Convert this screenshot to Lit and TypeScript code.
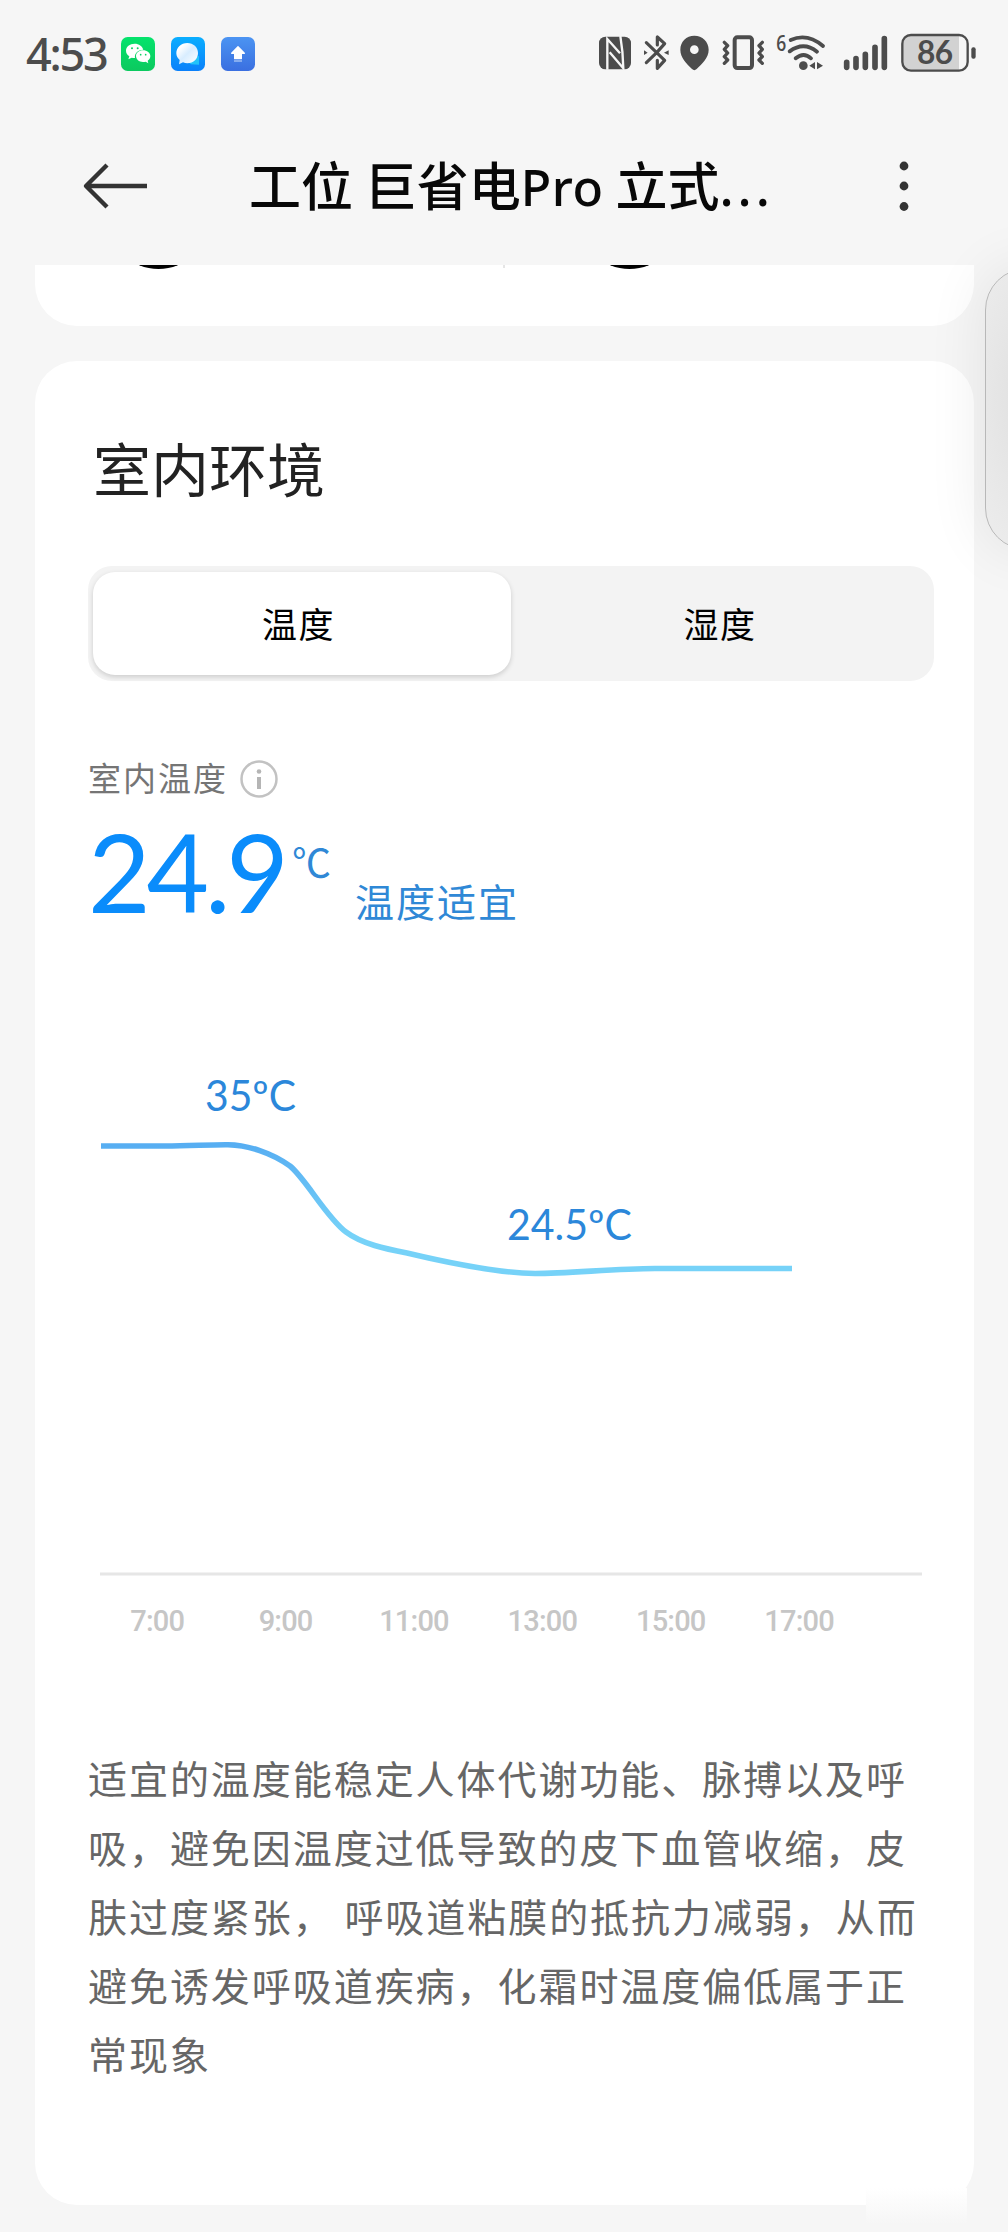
import { LitElement, html, css, svg } from "lit";
import { customElement, property, state } from "lit/decorators.js";
import { classMap } from "lit/directives/class-map.js";

/** Status bar: clock, notification badges, system indicators. Icons use a 3x grid. */
@customElement("status-bar")
class StatusBar extends LitElement {
  static styles = css`
    :host { display: flex; justify-content: space-between; height: 110px; padding: 0 32px 0 26px; color: #4c4c4c; box-sizing: border-box; }
    .left, .right { display: flex; align-items: flex-start; }
    .time { width: 95px; font: 500 45px/54px "Noto Sans", "Noto Sans CJK SC", sans-serif; letter-spacing: -2.2px; padding-top: 27px; }
    .badges { display: flex; gap: 16px; padding-top: 37px; }
    svg { display: block; overflow: visible; }
    .right { padding-top: 33px; }
    .nfc { margin-right: 12px; }
    .bt { margin-right: 11px; }
    .pin { margin-right: 13px; }
    .vib { margin-right: 12px; }
    .wifi { margin-right: 18px; }
    .sig { margin-right: 13px; }
    .pct { font: 700 95px "Lato", sans-serif; }
    .six { font: 600 66px "Open Sans", sans-serif; }
  `;

  render() {
    return html`
      <div class="left">
        <div class="time">4:53</div>
        <div class="badges">
          <svg width="34" height="34" viewBox="0 0 102 102">
            <defs><linearGradient id="g" x2="0" y2="1"><stop stop-color="#05e36c" /><stop offset="1" stop-color="#0cc95f" /></linearGradient></defs>
            <rect width="102" height="102" rx="20" fill="url(#g)" />
            <path fill="#fff" d="M41 20C26 20 15 29 15 41c0 7 4 13 10 17l-3 9 10-5q5 1 10 1C40 49 50 38 67 38 64 27 54 20 41 20Z" />
            <path fill="#fff" d="M66 40c-12 0-21 8-21 17s9 18 21 18q4 0 8-1l8 5-2-8c5-3 8-8 8-14 0-9-10-17-22-17Z" />
            <g fill="#0bd264"><circle cx="33" cy="34" r="3" /><circle cx="50" cy="34" r="3" /><circle cx="59" cy="53" r="2.5" /><circle cx="74" cy="53" r="2.5" /></g>
          </svg>
          <svg width="34" height="34" viewBox="0 0 102 102">
            <defs>
              <linearGradient id="b" x2="0" y2="1"><stop stop-color="#0aaeff" /><stop offset="1" stop-color="#0a80fa" /></linearGradient>
              <linearGradient id="w" x2="1" y2="1"><stop offset=".2" stop-color="#fff" /><stop offset=".5" stop-color="#d8edff" /><stop offset="1" stop-color="#fff" /></linearGradient>
            </defs>
            <rect width="102" height="102" rx="20" fill="url(#b)" />
            <path fill="#22c3fa" d="M84 56v27l-24-1q-6-3-7-8Z" />
            <path fill="url(#w)" d="M49 18C30 18 16 32 16 49c0 8 4 15 10 20l-2 13 12-6q6 3 13 3c19 0 32-14 32-31S67 18 49 18Z" />
          </svg>
          <svg width="34" height="34" viewBox="0 0 102 102">
            <defs><linearGradient id="u" x2="0" y2="1"><stop stop-color="#4b94f2" /><stop offset="1" stop-color="#3a6fe0" /></linearGradient></defs>
            <rect width="102" height="102" rx="20" fill="url(#u)" />
            <path fill="#fff" stroke="#fff" stroke-width="4" stroke-linejoin="round" d="M51 29 70 49H61V65H41V49H32Z" />
            <path fill="#a9c6f5" d="M39 70H63V74H39Z" />
          </svg>
        </div>
      </div>
      <div class="right">
        <svg class="nfc" width="33" height="39" viewBox="54 99 99 117">
          <rect x="54" y="110" width="96" height="98" rx="19" fill="#4c4c4c" />
          <path d="M79 209V117L117 160M118 108Q126 155 127 205L86 157" fill="none" stroke="#f6f6f6" stroke-width="7" />
        </svg>
        <svg class="bt" width="25" height="39" viewBox="190 99 75 117">
          <g fill="none" stroke="#4c4c4c" stroke-width="9.5" stroke-linecap="round" stroke-linejoin="round">
            <path d="M197 128 228 158 252 181 230 205V181M197 188 228 158 252 131 230 111V135" />
          </g>
          <path d="M190 151 201 158 190 165ZM264 151 250 158 264 165Z" fill="#4c4c4c" />
        </svg>
        <svg class="pin" width="29" height="39" viewBox="300 99 87 117">
          <path fill="#4c4c4c" fill-rule="evenodd" d="M343 107C319 107 301 125 301 149c0 24 19 42 35 58q7 7 14 0c16-16 36-34 36-58C386 125 367 107 343 107Zm0 29a13 13 0 1 1 0 26 13 13 0 0 1 0-26Z" />
        </svg>
        <svg class="vib" width="43" height="39" viewBox="428 99 129 117">
          <g fill="none" stroke="#4c4c4c" stroke-width="10" stroke-linecap="round" stroke-linejoin="round">
            <rect x="466" y="112" width="52" height="92" rx="8" stroke-width="12" />
            <path d="M435 127 445 137 435 148 445 159 435 170 445 180 435 190M549 127 539 137 549 148 539 159 549 170 539 180 549 190" />
          </g>
        </svg>
        <svg class="wifi" width="48" height="39" viewBox="591 99 144 117">
          <text class="six" x="589" y="152" textLength="30" lengthAdjust="spacingAndGlyphs" fill="#4c4c4c">6</text>
          <g fill="none" stroke="#4c4c4c" stroke-width="11.5" stroke-linecap="round">
            <path d="M632 120Q682 98 729 138M629 154Q671 123 711 155M647 175Q671 155 693 175" />
          </g>
          <circle cx="670" cy="197" r="13" fill="#4c4c4c" />
          <path d="M705 186V208L688 197ZM711 186V208L729 197Z" fill="#4c4c4c" />
        </svg>
        <svg class="sig" width="45" height="39" viewBox="791 99 135 117">
          <g stroke="#4c4c4c" stroke-width="17" stroke-linecap="round">
            <path d="M802 187V202M830 176V202M858 163V202M887 142V202M915 116V202" />
          </g>
        </svg>
        <svg width="75" height="39" viewBox="966 99 225 117">
          <path d="M988 104H1140V212H988Q970 212 970 190V126Q970 104 988 104Z" fill="#d2d2d2" />
          <rect x="970" y="105" width="196" height="107" rx="26" fill="none" stroke="#4c4c4c" stroke-width="7" />
          <rect x="1177" y="142" width="13" height="34" rx="6" fill="#4c4c4c" />
          <text class="pct" x="1014" y="193" textLength="108" fill="#4c4c4c">86</text>
        </svg>
      </div>
    `;
  }
}

@customElement("title-bar")
class TitleBar extends LitElement {
  @property() room = "";
  @property() brand = "";
  @property() model = "";
  static styles = css`
    :host { display: flex; align-items: center; height: 155px; padding: 0 94px 0 80px; box-sizing: border-box; }
    .title { display: block; font: 500 52px/70px "Noto Sans CJK SC", sans-serif; color: #080808; margin: 0 0 0 99px; white-space: nowrap; }
    .latin { font-family: "Noto Sans", sans-serif; font-size: 50px; letter-spacing: 0.6px; }
    .dots { font-family: "Noto Sans", sans-serif; letter-spacing: 4px; }
    svg { display: block; }
    .more { margin-left: auto; }
    .back, .more, .title { position: relative; top: -2px; }
  `;
  render() {
    return html`
      <svg class="back" width="70" height="50" fill="none" stroke="#333" stroke-width="4.4" stroke-linejoin="round"><path d="M67 25H7M27 4 6 25 27 46" /></svg>
      <h1 class="title">${this.room}<span class="latin">${this.brand}</span>${this.model}<span class="dots">...</span></h1>
      <svg class="more" width="20" height="52" fill="#333"><circle cx="10" cy="6" r="4.4" /><circle cx="10" cy="26" r="4.4" /><circle cx="10" cy="46.5" r="4.4" /></svg>
    `;
  }
}

@customElement("temperature-chart")
class TemperatureChart extends LitElement {
  static hours = ["7:00", "9:00", "11:00", "13:00", "15:00", "17:00"];
  static styles = css`
    :host { display: block; }
    svg { display: block; }
    .mark { font: 400 42px "Lato", "Noto Sans", sans-serif; fill: #2b87da; }
    .hours { display: grid; grid-template-columns: repeat(6, 128.4px); padding-left: 5px; margin-top: 27px; font: 500 29px/36px "Roboto", sans-serif; letter-spacing: -0.8px; color: #c6c6c6; text-align: center; }
  `;
  render() {
    return html`
      <svg width="846" height="536" viewBox="88 1040 846 536">
        <defs>
          <linearGradient id="line" gradientUnits="userSpaceOnUse" x1="0" y1="1145" x2="0" y2="1235"><stop stop-color="#57aef2" /><stop offset="1" stop-color="#76d2f8" /></linearGradient>
        </defs>
        ${svg`<text class="mark" x="205" y="1111" textLength="91" lengthAdjust="spacingAndGlyphs">35ºC</text>
        <text class="mark" x="507" y="1239.5" textLength="125" lengthAdjust="spacingAndGlyphs">24.5ºC</text>`}
        <path d="M101 1146H165C190 1146 210 1144.5 228 1144.7C248 1145 272 1153 290 1166C306 1179 326 1217 346 1232C362 1244 386 1249 407 1253C428 1258 492 1273 535 1273.5C570 1273.5 615 1268.5 655 1268.5H792" fill="none" stroke="url(#line)" stroke-width="5.6" />
        <path d="M100 1574H922" stroke="#e6e6e6" stroke-width="3" />
      </svg>
      <div class="hours">${TemperatureChart.hours.map((h) => html`<span>${h}</span>`)}</div>
    `;
  }
}

@customElement("app-root")
class AppRoot extends LitElement {
  @state() tab = 0;
  static tabs = ["温度", "湿度"];
  static advice = [
    "适宜的温度能稳定人体代谢功能、脉搏以及呼",
    "吸，避免因温度过低导致的皮下血管收缩，皮",
    "肤过度紧张， 呼吸道粘膜的抵抗力减弱，从而",
    "避免诱发呼吸道疾病，化霜时温度偏低属于正",
    "常现象",
  ];
  static styles = css`
    :host { display: block; position: relative; width: 1008px; height: 2232px; overflow: hidden; background: #f6f6f6; font-family: "Noto Sans CJK SC", sans-serif; }
    .cards { display: flex; flex-direction: column; gap: 35px; padding: 0 34px 0 35px; }
    .previous { height: 61px; background: #fff; border-radius: 0 0 42px 42px; overflow: hidden; }
    .previous svg { display: block; }
    .card { height: 1844px; box-sizing: border-box; background: #fff; border-radius: 42px; padding: 63px 40px 0 53px; }
    h2 { margin: 0; padding-left: 5px; font-weight: 400; font-size: 58px; line-height: 86px; color: #222; }
    .tabs { display: grid; grid-template-columns: 1fr 1fr; box-sizing: border-box; height: 115px; margin-top: 56px; padding: 6px 5px; border-radius: 24px; background: #f3f3f3; }
    .tab { display: flex; align-items: center; justify-content: center; box-sizing: border-box; font: inherit; font-size: 35px; letter-spacing: 1.5px; color: #000; border: 0; background: none; padding: 0 0 3px; border-radius: 22px; }
    .tab.on { background: #fff; padding-right: 7px; box-shadow: 0 2px 5px rgba(0, 0, 0, 0.16); }
    .label { display: flex; align-items: center; gap: 12px; height: 48px; margin-top: 74px; font-size: 33px; letter-spacing: 2px; color: #757575; }
    .label span { padding-bottom: 4px; }
    .reading { display: flex; height: 102px; margin-top: 17px; align-items: baseline; white-space: nowrap; }
    .value { width: 204px; font: 400 108px/102px "Lato", sans-serif; letter-spacing: -4.2px; color: #0a8cfb; }
    .unit { width: 63px; font-size: 39px; color: #2f88d6; position: relative; top: -36px; }
    .state { font-size: 39px; letter-spacing: 2px; color: #2f88d6; position: relative; top: 4px; }
    temperature-chart { margin-top: 118px; }
    .advice { margin: 104px 0 0; font-size: 39px; line-height: 69px; letter-spacing: 1.95px; color: #666; white-space: nowrap; }
    .advice span { display: block; }
    .drawer { position: absolute; left: 985px; top: 268px; width: 90px; height: 282px; box-sizing: border-box; border: 1.5px solid #b8b8b8; border-radius: 42px; background: radial-gradient(ellipse 60px 150px at 40px 130px, #e0e0e0, #ebebeb); box-shadow: 0 0 60px rgba(0, 0, 0, 0.09); }
    .haze { position: absolute; left: 866px; top: 2188px; width: 101px; height: 36px; background: linear-gradient(#fff, #f6f6f6); }
  `;
  render() {
    return html`
      <status-bar></status-bar>
      <title-bar room="工位 巨省电" brand="Pro" model=" 立式"></title-bar>
      <main class="cards">
        <section class="previous">
          <svg width="939" height="6"><circle cx="123.5" cy="-46" r="50" /><circle cx="594.5" cy="-46" r="50" /><path d="M469 0V3" stroke="#ccc" /></svg>
        </section>
        <section class="card">
          <h2>室内环境</h2>
          <div class="tabs">
            ${AppRoot.tabs.map((t, i) => html`<button class=${classMap({ tab: true, on: i === this.tab })} @click=${() => (this.tab = i)}>${t}</button>`)}
          </div>
          <div class="label"><span>室内温度</span>
            <svg width="38" height="38"><circle cx="19" cy="19" r="17.5" fill="none" stroke="#c2c2c2" stroke-width="2.5" /><circle cx="19" cy="11.5" r="2.3" fill="#b5b5b5" /><path d="M19 17V29" stroke="#b5b5b5" stroke-width="4" /></svg>
          </div>
          <div class="reading"><span class="value">24.9</span><span class="unit">℃</span><span class="state">温度适宜</span></div>
          <temperature-chart></temperature-chart>
          <p class="advice">${AppRoot.advice.map((l) => html`<span>${l}</span>`)}</p>
        </section>
      </main>
      <div class="haze"></div>
      <div class="drawer"></div>
    `;
  }
}
